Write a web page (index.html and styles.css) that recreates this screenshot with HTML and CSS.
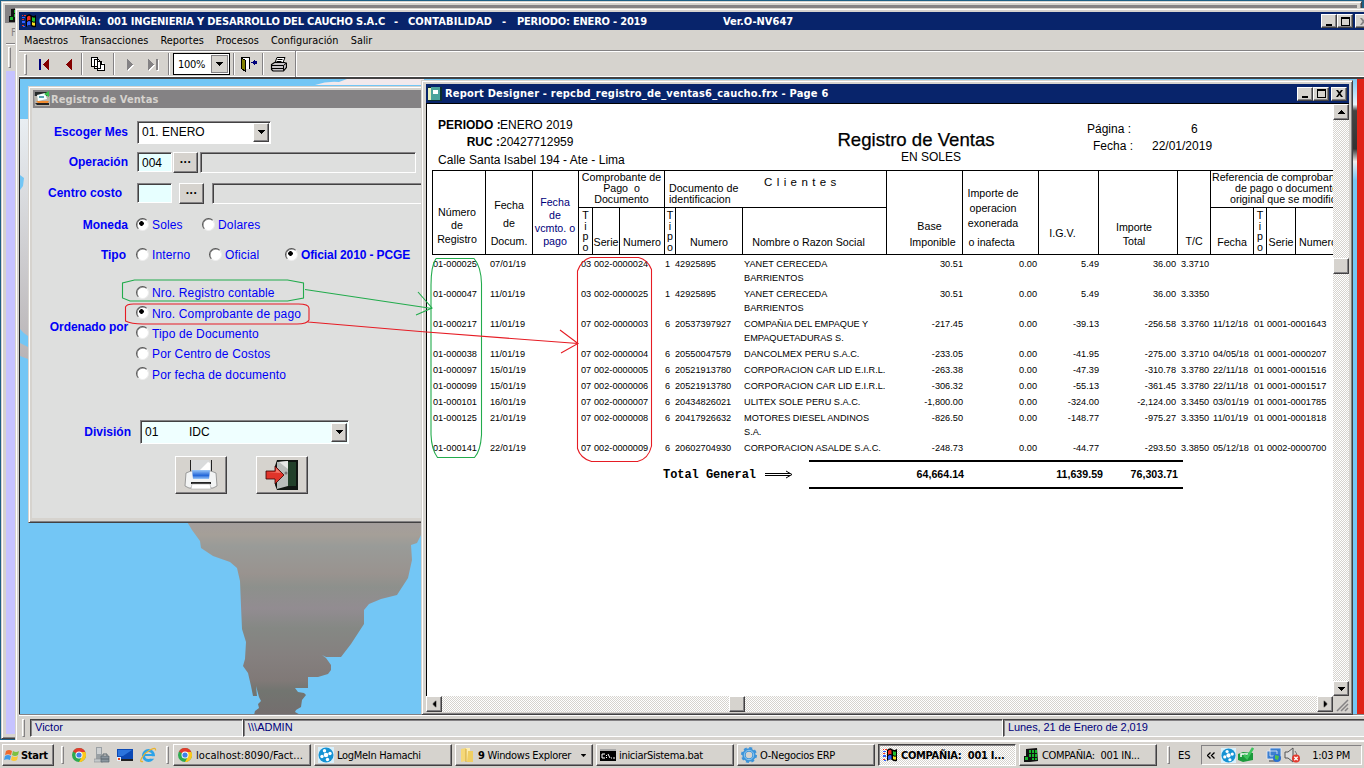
FILE: index.html
```html
<!DOCTYPE html>
<html lang="es">
<head>
<meta charset="utf-8">
<title>Registro de Ventas</title>
<link rel="stylesheet" href="styles.css">
</head>
<body>
<svg class="defs" width="0" height="0" aria-hidden="true">
  <symbol id="win" viewBox="0 0 16 16">
    <path d="M1 2h1v1H1zM3 2h2v1H3zM1 6h2v1H1zM1 12h2v1H1z" fill="#f03020"/>
    <path d="M1 4h3v1H1zM1 8h3v2H1zM2 13h2v1H2z" fill="#3060ff"/>
    <path d="M5 3q3-3 5-1t5 0v12q-3 1-5-1t-5 1z" fill="#000"/>
    <path d="M6 4q2-2 3.500-.5v4Q8 6.500 6 8z" fill="#f03020"/><path d="M11 4q1.500 1 3 .5v4q-1.500.5-3-.5z" fill="#20c030"/>
    <path d="M6 9q2-1.500 3.500-.5v4Q8 11.500 6 13z" fill="#3060ff"/><path d="M11 9q1.500 1 3 .5v3q-1.500.5-3-.5z" fill="#f8e020"/>
  </symbol>
  <symbol id="greenapp" viewBox="0 0 16 16">
    <path d="M3 2l11-1 1 13-8 1H1V9h2z" fill="#111"/>
    <path d="M6 3h2v3H6zM9 3h2v3H9zM12 3h2v3h-2zM6 7h2v3H6zM9 7h2v3H9zM12 7h2v3h-2zM2 10h3v3H2zM9 11h2v2H9zM12 11h2v2h-2z" fill="#19b52c"/>
  </symbol>
  <symbol id="chrome" viewBox="0 0 16 16">
    <circle cx="8" cy="8" r="7" fill="#2da94f"/>
    <path d="M8 8L2 4.400A7 7 0 0 1 14.300 5H8z" fill="#e33b2e"/>
    <path d="M8 15l3-5.500L10 5h4.400A7 7 0 0 1 8 15z" fill="#fdc71b"/>
    <circle cx="8" cy="8" r="3.500" fill="#fff"/><circle cx="8" cy="8" r="2.600" fill="#3f7fe8"/>
  </symbol>
  <symbol id="hamachi" viewBox="0 0 16 16">
    <rect width="16" height="16" fill="#d9f0fb"/><circle cx="8" cy="8" r="7.500" fill="#1592d3"/>
    <g fill="#fff"><circle cx="8" cy="8" r="2.300"/><circle cx="6.500" cy="3.700" r="1.700"/><circle cx="12" cy="6.500" r="1.700"/><circle cx="4" cy="9.500" r="1.700"/><circle cx="9.500" cy="12.500" r="1.700"/></g>
  </symbol>
  <symbol id="down" viewBox="0 0 7 4"><path d="M0 0h7v1H0zM1 1h5v1H1zM2 2h3v1H2zM3 3h1v1H3z"/></symbol>
  <symbol id="min" viewBox="0 0 13 11"><path d="M3 8h6v2H3z"/></symbol>
  <symbol id="max" viewBox="0 0 13 11"><path d="M2 1h9v9H2zM3 3v6h7V3z" fill-rule="evenodd"/></symbol>
  <symbol id="close" viewBox="0 0 13 11"><path d="M3 2h2l1.500 2L8 2h2L7.500 5.500 10 9H8L6.500 7 5 9H3l2.500-3.500z"/></symbol>
</svg>

<div class="desktop">
  <section class="window backwin">
    <div class="backtitle"><svg width="16" height="16"><use href="#greenapp"/></svg></div>
    <div class="backmenu">F</div>
    <div class="backbar"><i class="grip"></i></div>
    <div class="backbody"></div>
  </section>

  <section class="window main">
    <header class="title"><svg width="16" height="16"><use href="#win"/></svg>
      <span class="t1">COMPAÑIA:&nbsp; 001 INGENIERIA Y DESARROLLO DEL CAUCHO S.A.C</span><span class="t2">-</span><span class="t3">CONTABILIDAD</span><span class="t4">-</span><span class="t5">PERIODO: ENERO - 2019</span><span class="t6">Ver.O-NV647</span>
      <span class="ctl maincontrols"><b><svg width="13" height="11"><use href="#min"/></svg></b><b><svg width="13" height="11"><use href="#max"/></svg></b><b class="x"><svg class="off" width="13" height="11"><use href="#close"/></svg></b></span>
    </header>
    <nav class="menu"><span>Maestros</span><span>Transacciones</span><span>Reportes</span><span>Procesos</span><span>Configuración</span><span>Salir</span></nav>
    <div class="toolbar">
      <div class="tools">
        <i class="grip"></i>
        <span class="tool w-first"><svg width="12" height="12" shape-rendering="crispEdges"><path d="M1 1h2v11H1z" fill="#00007b"/><path d="M11 1v11L5 6.500z" fill="#840000"/></svg></span>
        <span class="tool w-prev"><svg width="8" height="12" shape-rendering="crispEdges"><path d="M7 1v11L1 6.500z" fill="#840000"/></svg></span>
        <i class="sep"></i>
        <span class="tool w-copy"><svg width="14" height="14" shape-rendering="crispEdges" fill="#fff" stroke="#000"><path d="M.5.500h6v9h-6zM3.500 2.500h4l2 2v7h-6zM6.500 4.500h4l3 3v6h-7z"/><path d="M10.500 4.500v3h3"/></svg></span>
        <i class="sep"></i>
        <span class="tool w-next"><svg width="8" height="13" shape-rendering="crispEdges"><path d="M2 2v11l6-5.500z" fill="#fff"/><path d="M1 1v11l6-5.500z" fill="#848284"/></svg></span>
        <span class="tool w-last"><svg width="13" height="13" shape-rendering="crispEdges"><path d="M2 2v11l6-5.500zM10 2h2v11h-2z" fill="#fff"/><path d="M1 1v11l6-5.500zM9 1h2v11H9z" fill="#848284"/></svg></span>
        <i class="sep"></i>
        <span class="zoom">100%<b><svg width="7" height="4"><use href="#down"/></svg></b></span>
        <i class="sep"></i>
        <span class="tool w-exit"><svg width="17" height="15" shape-rendering="crispEdges"><path d="M1.500 11V.5h8V12" fill="#fff" stroke="#000"/><path d="M1.500 1l4 2.500V14.500l-4-3z" fill="#848200" stroke="#000"/><path d="M11 5h1l3-3v2h2v3h-2v2l-3-3h-1z" fill="#00007b"/></svg></span>
        <i class="sep"></i>
        <span class="tool w-print"><svg width="17" height="15"><path d="M5 5.500l2-5h8l-2 5z" fill="#fff" stroke="#000"/><path d="M7.500 2.500h5M6.500 4.500h5" stroke="#000"/><path d="M1.500 7.500l3-2h10l2 1v4l-3 3.500H3l-1.500-1.500z" fill="#c6c3c6" stroke="#000" stroke-width="1.200"/><path d="M1.500 8.500h12l3-2.500M2 11.500h11M13.500 8.500v5" stroke="#000" fill="none"/></svg></span>
      </div>
    </div>
    <div class="client">
      <svg class="wallpaper" viewBox="20 80 1344 635" width="1344" height="635">
        <defs>
          <linearGradient id="land" gradientUnits="userSpaceOnUse" x1="0" y1="520" x2="0" y2="715"><stop offset="0" stop-color="#a39d9d"/><stop offset=".08" stop-color="#a59f98"/><stop offset=".14" stop-color="#999b98"/><stop offset=".28" stop-color="#99938f"/><stop offset=".35" stop-color="#8d908c"/><stop offset=".46" stop-color="#928c91"/><stop offset=".56" stop-color="#858884"/><stop offset=".7" stop-color="#85807f"/><stop offset=".83" stop-color="#807977"/><stop offset=".88" stop-color="#727570"/><stop offset="1" stop-color="#746e6e"/></linearGradient>
          <linearGradient id="haze" x1="0" y1="0" x2="0" y2="1"><stop offset="0" stop-color="#e9eef2"/><stop offset="1" stop-color="#b9b4b6"/></linearGradient>
          <linearGradient id="edge" x1="0" y1="0" x2="0" y2="1"><stop offset="0" stop-color="#7cc8f5"/><stop offset=".04" stop-color="#e8f3fa"/><stop offset=".05" stop-color="#444"/><stop offset=".11" stop-color="#333"/><stop offset=".13" stop-color="#eee"/><stop offset=".16" stop-color="#74c6f5"/><stop offset="1" stop-color="#74c6f5"/></linearGradient>
        </defs>
        <rect x="20" y="80" width="1344" height="635" fill="#73c6f5"/>
        <path d="M20 120h8v217q-4-2-8-7zM20 344l8 4v12l-8-3z" fill="url(#haze)"/>
        <path d="M20 176l4 3-1 8-3 4z" fill="#73c6f5"/>
        <path d="M315 86q12-4 24-3l8-3h77v6z" fill="#f2e9ec"/>
        <path d="M186 521l6 10 8 11 1 7 12 8 17 6 7 6 3 13 1 25 1 23 4 13-1 17-2 7 5 7 3 13 2 10h4l-1-10 3 11 2 4-3 3 1 4-4 3-1 4 10 3h42l-11-6 1-2 5-3 1-7 4-5-2-2-6-1-3-4h13v-11h10l10-3 3-4v-5l-5-7-4-3 4 2h15l10-13 13-20v-14l5-6 12-5 16-4 11-17 4-18-1-15 6-2 4-8 2-12z" fill="url(#land)"/>
        <path d="M1353 80h5v635h-5z" fill="url(#edge)"/><path d="M1357 80h7v635h-7z" fill="#de2418"/>
      </svg>
    </div>
    <footer class="status"><i class="grip"></i><span class="user">Victor</span><span class="role">\\\ADMIN</span><span class="date">Lunes, 21 de Enero de 2,019</span></footer>
  </section>

  <section class="window form">
    <header class="title gray"><svg width="16" height="16"><path d="M1 1h14v5H1z" fill="#252a2a"/><path d="M0 5h16v10H1z" fill="#b8b4ac"/><path d="M3 4l8-2 2 6-9 2z" fill="#f5ffff"/><path d="M5 5h5v2H5z" fill="#5aa0b0"/><path d="M10 3l5-3v6z" fill="#38c24c"/><path d="M2 10h13l-1 2H4z" fill="#f08b30"/><path d="M1 12h14v2H3z" fill="#222"/></svg><span>Registro de Ventas</span></header>
    <div class="fields">
      <div class="row r1"><label>Escoger Mes</label><span class="combo mes">01. ENERO<b><svg width="7" height="4"><use href="#down"/></svg></b></span></div>
      <div class="row r2"><label>Operación</label><span class="box">004</span><span class="dots">...</span><span class="long"></span></div>
      <div class="row r3"><label class="cc">Centro costo</label><span class="box"></span><span class="dots">...</span><span class="long"></span></div>
      <div class="row r4"><label>Moneda</label><span class="radio on soles">Soles</span><span class="radio">Dolares</span></div>
      <div class="row r5"><label class="tp">Tipo</label><span class="radio interno">Interno</span><span class="radio oficial">Oficial</span><span class="radio on strong">Oficial 2010 - PCGE</span></div>
      <div class="row r6"><label>Ordenado por</label><div class="radios"><span class="radio">Nro. Registro contable</span><span class="radio on">Nro. Comprobante de pago</span><span class="radio">Tipo de Documento</span><span class="radio">Por Centro de Costos</span><span class="radio">Por fecha de documento</span></div></div>
      <div class="row r7"><label>División</label><span class="combo division"><span class="code">01</span>IDC<b><svg width="7" height="4"><use href="#down"/></svg></b></span></div>
      <div class="actions">
        <span class="big"><svg width="34" height="32"><defs><linearGradient id="pb" x1="0" y1="0" x2="0" y2="1"><stop offset="0" stop-color="#9cc8f8"/><stop offset=".6" stop-color="#2266d8"/><stop offset="1" stop-color="#9cc8f8"/></linearGradient></defs><path d="M6.500 1v13M27.500 1v13" stroke="#222"/><path d="M7 1h18l2 4v10H7z" fill="#d9dbdc"/><path d="M14 13L24 3l2 1v9z" fill="#fff"/><path d="M2 14l5-2h20l5 2 1 13-4 2H5l-4-2z" fill="#f3f4f4" stroke="#888" stroke-width=".8"/><path d="M8 11h18l-1 9H9z" fill="url(#pb)"/><path d="M7 24h20" stroke="#222" stroke-width="2"/><path d="M8 25h18l1 5H7z" fill="#fff" stroke="#aaa" stroke-width=".6"/></svg></span>
        <span class="big"><svg width="34" height="32"><path d="M12 1h21v30H12l-2-5V7z" fill="#101512"/><path d="M22 3h9v24h-9z" fill="#22402a"/><path d="M12 3l11-1v25l-11 3z" fill="#b9bdbb"/><path d="M14 3l9-1v8z" fill="#e6e8e7"/><circle cx="21" cy="14" r="1.500" fill="#777"/><path d="M1 12h9V7l9 9-9 9v-5H1z" fill="#e0342a" stroke="#300" stroke-width=".8"/><path d="M2 13h9V9l5 5z" fill="#f4796c"/></svg></span>
      </div>
    </div>
  </section>

  <section class="window report">
    <header class="title"><svg width="14" height="14"><path d="M0 0h14v14H0z" fill="#0b2f2c"/><path d="M3 0h9v13H3z" fill="#4aa39b"/><path d="M0 1h3v12H0z" fill="#e8f0c0"/><path d="M5 3h5v4H5z" fill="#fff"/></svg><span>Report Designer - repcbd_registro_de_ventas6_caucho.frx - Page 6</span>
      <span class="ctl"><b><svg width="13" height="11"><use href="#min"/></svg></b><b><svg width="13" height="11"><use href="#max"/></svg></b><b class="x"><svg width="13" height="11"><use href="#close"/></svg></b></span></header>
    <div class="viewport">
      <div class="page">
        <div class="heading">
          <div class="company"><div><b>PERIODO :</b><span>ENERO 2019</span></div><div><b>RUC :</b><span>20427712959</span></div><p>Calle Santa Isabel 194 - Ate - Lima</p></div>
          <div class="name"><h1>Registro de Ventas</h1><p>EN SOLES</p></div>
          <div class="pageinfo"><span>Página :</span><span class="six">6</span><span class="fl">Fecha :</span><span>22/01/2019</span></div>
        </div>
        <div class="thead">
          <div class="c c1">Número<br>de<br>Registro</div>
          <div class="c c2">Fecha<br>de<br>Docum.</div>
          <div class="c c3">Fecha<br>de<br>vcmto. o<br>pago</div>
          <div class="group"><div class="top">Comprobante de<br>Pago&nbsp; o<br>Documento</div><div class="sub s1"><span class="v">T<br>i<br>p<br>o</span><span>Serie</span><span>Numero</span></div></div>
          <div class="group"><div class="top cli"><span>Documento de<br>identificacion</span><span class="wide">C l i e n t e s</span></div><div class="sub s2"><span class="v">T<br>i<br>p<br>o</span><span>Numero</span><span class="rs">Nombre o Razon Social</span></div></div>
          <div class="c c6"><span class="base">Base</span>Imponible</div>
          <div class="c c7">Importe de<br>operacion<br>exonerada<span class="in">o inafecta</span></div>
          <div class="c c8">I.G.V.</div>
          <div class="c c9">Importe<br>Total</div>
          <div class="c c10">T/C</div>
          <div class="group"><div class="top ref"><span>Referencia de comprobante</span><span class="l2">de pago o documento</span><span class="l3">original que se modifica</span></div><div class="sub s3"><span>Fecha</span><span class="v">T<br>i<br>p<br>o</span><span>Serie</span><span>Numero</span></div></div>
        </div>
        <div class="tbody">
          <div class="tr two"><span>01-000025</span><span>07/01/19</span><span>03</span><span>002-0000024</span><span>1</span><span>42925895</span><span>YANET CERECEDA<br>BARRIENTOS</span><span>30.51</span><span>0.00</span><span>5.49</span><span>36.00</span><span>3.3710</span></div>
          <div class="tr two"><span>01-000047</span><span>11/01/19</span><span>03</span><span>002-0000025</span><span>1</span><span>42925895</span><span>YANET CERECEDA<br>BARRIENTOS</span><span>30.51</span><span>0.00</span><span>5.49</span><span>36.00</span><span>3.3350</span></div>
          <div class="tr two"><span>01-000217</span><span>11/01/19</span><span>07</span><span>002-0000003</span><span>6</span><span>20537397927</span><span>COMPAÑIA DEL EMPAQUE Y<br>EMPAQUETADURAS S.</span><span>-217.45</span><span>0.00</span><span>-39.13</span><span>-256.58</span><span>3.3760</span><span>11/12/18</span><span>01</span><span>0001-0001643</span></div>
          <div class="tr"><span>01-000038</span><span>11/01/19</span><span>07</span><span>002-0000004</span><span>6</span><span>20550047579</span><span>DANCOLMEX PERU S.A.C.</span><span>-233.05</span><span>0.00</span><span>-41.95</span><span>-275.00</span><span>3.3710</span><span>04/05/18</span><span>01</span><span>0001-0000207</span></div>
          <div class="tr"><span>01-000097</span><span>15/01/19</span><span>07</span><span>002-0000005</span><span>6</span><span>20521913780</span><span>CORPORACION CAR LID E.I.R.L.</span><span>-263.38</span><span>0.00</span><span>-47.39</span><span>-310.78</span><span>3.3780</span><span>22/11/18</span><span>01</span><span>0001-0001516</span></div>
          <div class="tr"><span>01-000099</span><span>15/01/19</span><span>07</span><span>002-0000006</span><span>6</span><span>20521913780</span><span>CORPORACION CAR LID E.I.R.L.</span><span>-306.32</span><span>0.00</span><span>-55.13</span><span>-361.45</span><span>3.3780</span><span>22/11/18</span><span>01</span><span>0001-0001517</span></div>
          <div class="tr"><span>01-000101</span><span>16/01/19</span><span>07</span><span>002-0000007</span><span>6</span><span>20434826021</span><span>ULITEX SOLE PERU S.A.C.</span><span>-1,800.00</span><span>0.00</span><span>-324.00</span><span>-2,124.00</span><span>3.3450</span><span>03/01/19</span><span>01</span><span>0001-0001785</span></div>
          <div class="tr two"><span>01-000125</span><span>21/01/19</span><span>07</span><span>002-0000008</span><span>6</span><span>20417926632</span><span>MOTORES DIESEL ANDINOS<br>S.A.</span><span>-826.50</span><span>0.00</span><span>-148.77</span><span>-975.27</span><span>3.3350</span><span>11/01/19</span><span>01</span><span>0001-0001818</span></div>
          <div class="tr"><span>01-000141</span><span>22/01/19</span><span>07</span><span>002-0000009</span><span>6</span><span>20602704930</span><span>CORPORACION ASALDE S.A.C.</span><span>-248.73</span><span>0.00</span><span>-44.77</span><span>-293.50</span><span>3.3850</span><span>05/12/18</span><span>01</span><span>0002-0000700</span></div>
        </div>
        <div class="totals"><span class="tg">Total General</span><svg width="28" height="9" fill="none" stroke="#000" shape-rendering="crispEdges"><path d="M0 3.500h25M0 5.500h25"/><path d="M21 1l6 3.500-6 3.500" shape-rendering="auto"/></svg><div class="sums"><span>64,664.14</span><span>11,639.59</span><span>76,303.71</span></div></div>
      </div>
      <div class="vbar"><b class="btn"><svg width="7" height="4" class="up"><use href="#down"/></svg></b><b class="btn thumb"></b><b class="btn last"><svg width="7" height="4"><use href="#down"/></svg></b></div>
    </div>
    <div class="hbar"><b class="btn"><svg width="7" height="4" class="left"><use href="#down"/></svg></b><b class="btn thumb"></b><b class="btn last"><svg width="7" height="4" class="right"><use href="#down"/></svg></b><svg class="size" width="16" height="16"><path d="M4 15L15 4M8 15l7-7M12 15l3-3" stroke="#848284" stroke-width="1.500"/></svg></div>
  </section>

  <!-- hand-drawn notes linking the sort options with report columns -->
  <svg class="notes" width="1364" height="768" fill="none" stroke-width="1.100">
    <g stroke="#22ab4c"><path d="M122.500 298v-15l12-3h153l16 3v15l-16 3H130zM305 289.500l127 19M418 292l14 16-16 7"/><path d="M436 258.500h38q7 8 7.500 25V435q-1 16-7 22.500h-37q-6-8-6.500-23V285q0-19 5-26.500"/></g>
    <g stroke="#e61c24"><path d="M125.500 321v-14q1-3 8-3h165q10 0 10.500 4v12q-2 4-12 4H143q-12 0-17.500-3zM308 322l112 9.500 158 12M560 330l18 13.500-17 9.500"/><path d="M590.500 257.500h48q9 2 13 12V446q-3 13-14 15.500h-46q-11-3-14-13V271q4-11 13-13.500"/></g>
  </svg>

  <footer class="taskbar">
    <span class="task start"><svg width="16" height="16"><path d="M2 4q3-2 6 0L7 8Q4 6.500 1 8z" fill="#ee6a2c"/><path d="M9 4q3 2 6 0l-1 4q-3 2-6 0z" fill="#7cc142"/><path d="M1 9q3-2 6 0l-1 4q-3-1.500-6 0z" fill="#3f9be8"/><path d="M8 9q3 2 6 0l-1 4q-3 2-6 0z" fill="#fbc936"/></svg>Start</span>
    <i class="grip g1"></i>
    <span class="quick">
      <svg width="16" height="16"><use href="#chrome"/></svg>
      <svg width="16" height="16"><path d="M2 0h6v12H2z" fill="#9aa0a4"/><path d="M3 2h4M3 4h4M3 6h4" stroke="#fff"/><path d="M0 12h9v3H0z" fill="#c4c8ca" stroke="#8a8e90" stroke-width=".6"/><path d="M7 9h8v6H7z" fill="#8b969f" stroke="#59646d" stroke-width=".7"/><path d="M9 9V7h4v2M7 12h8" stroke="#59646d" fill="none"/></svg>
      <svg width="16" height="16"><path d="M0 2h16v10H0z" fill="#0b49b5"/><path d="M1 3h14L6 9H1z" fill="#2b74dd"/><path d="M1 12h15v2H3z" fill="#222"/><path d="M0 10h4v4H0z" fill="#e9f2fd"/><path d="M1 11h2v2H1z" fill="#e54820"/></svg>
      <svg width="17" height="16"><circle cx="8.500" cy="8.500" r="5" fill="none" stroke="#2ba3e8" stroke-width="3"/><path d="M4 8h9" stroke="#2ba3e8" stroke-width="2"/><path d="M9 9.300h7v2.500h-5z" fill="#d6d3ce"/><path d="M3 14.500Q-1 15.500 2 10.500T10 3q6-3.500 5.500.5" fill="none" stroke="#eab32c" stroke-width="1.300"/></svg>
    </span>
    <i class="grip g2"></i>
    <span class="task loc"><svg width="16" height="16"><use href="#chrome"/></svg>localhost:8090/Fact...</span>
    <span class="task"><svg width="16" height="16"><use href="#hamachi"/></svg>LogMeIn Hamachi</span>
    <span class="task"><svg width="16" height="16"><path d="M2 2l5-1v13l-5 1z" fill="#f5d878"/><path d="M7 1h4v13H7z" fill="#fdeeb2"/><path d="M9 4h5v11H8z" fill="#f0ce62"/><path d="M7 2v13" stroke="#d0a63c"/></svg><strong>9</strong>&nbsp;Windows Explorer<svg class="drop" width="5" height="3" viewBox="0 0 7 4"><use href="#down"/></svg></span>
    <span class="task"><svg width="16" height="16"><path d="M0 2h16v12H0z" fill="#000"/><path d="M0 2h16v2H0z" fill="#aaa"/><path d="M5 7H2v4h3M6.500 8v1M6.500 10v1M8 7l2 4M11 11h1M13 11h2" stroke="#fff" fill="none"/></svg>iniciarSistema.bat</span>
    <span class="task"><svg width="16" height="16"><circle cx="8" cy="8" r="5" fill="none" stroke="#3c93d9" stroke-width="3.500"/><circle cx="8" cy="8" r="7" fill="none" stroke="#3c93d9" stroke-width="2" stroke-dasharray="3 2.500"/><circle cx="8" cy="8" r="4.700" fill="none" stroke="#8cc8f2" stroke-width="1"/></svg>O-Negocios ERP</span>
    <span class="task active"><svg width="16" height="16"><use href="#win"/></svg>COMPAÑIA:&nbsp; 001 I...</span>
    <span class="task"><svg width="16" height="16"><use href="#greenapp"/></svg>COMPAÑIA:&nbsp; 001 IN...</span>
    <i class="grip g3"></i>
    <span class="lang">ES</span>
    <span class="tray"><svg class="chev" width="8" height="7" fill="none" stroke="#000" stroke-width="1.300"><path d="M3.500.5l-3 3 3 3M7.500.5l-3 3 3 3"/></svg><svg width="15" height="15"><use href="#hamachi"/></svg><svg width="16" height="16"><path d="M0 7l5-2 10 1v7l-10 2-5-2z" fill="#1c9a3c"/><path d="M3 10V7h7" fill="none" stroke="#fff" stroke-width="1.500"/><path d="M6 8l3 3 6-10" fill="none" stroke="#3fc45e" stroke-width="2.500"/></svg><svg class="net" width="16" height="16"><path d="M4 1h11v8H4zM1 4h10v8H1z" fill="#3c7fd0" stroke="#e8eef8" stroke-width=".8"/><path d="M3 13h7v2H3z" fill="#888"/><circle cx="11" cy="11" r="4" fill="#2a6fd2"/><path d="M9 8l4 1-1 4-3-1z" fill="#4fc24e"/></svg><svg width="17" height="16"><path d="M1 5h3l5-4v14l-5-4H1z" fill="#dcdcdc" stroke="#555"/><path d="M11 4q3 3 1 6" fill="none" stroke="#777"/><circle cx="12" cy="11.500" r="4" fill="#e33a2e"/><path d="M10.300 9.800l3.400 3.400M13.700 9.800l-3.400 3.400" stroke="#fff" stroke-width="1.300"/></svg><span class="clock">1:03 PM</span></span>
  </footer>
</div>
</body>
</html>
```
FILE: styles.css
```css
* { box-sizing: border-box; }
body { margin: 0; overflow: hidden; font: 11px "DejaVu Sans Condensed", "DejaVu Sans", sans-serif; color: #000; }
svg { display: block; flex: none; }
.defs { position: absolute; }
i { font-style: normal; }
p, h1 { margin: 0; font-weight: normal; }

.desktop { position: relative; width: 1364px; height: 768px; overflow: hidden; background: #1d5f85; }
.window { position: absolute; display: flex; flex-direction: column; background: #d6d3ce; white-space: nowrap; }

.grip { flex: none; width: 3px; border: 1px solid; border-color: #fff #848284 #848284 #fff; background: #d6d3ce; }
.sep { flex: none; width: 2px; height: 22px; border-left: 1px solid #848284; border-right: 1px solid #fff; }
.btn, .ctl b { display: flex; align-items: center; justify-content: center; flex: none; background: #d6d3ce; border: 1px solid; border-color: #fff #424142 #424142 #fff; box-shadow: inset -1px -1px #848284; }

/* window in the background */
.backwin { left: 1px; top: 1px; width: 1361px; height: 738px; padding: 4px; border: 1px solid; border-color: #d6d3ce #424142 #424142 #d6d3ce; box-shadow: inset 1px 1px #fff, inset -1px -1px #848284; }
.backtitle { height: 18px; margin: -1px 0 0 -1px; padding: 2px 3px; background: #848284; }
.backmenu { height: 20px; padding: 3px 5px; color: #848284; font-size: 10.5px; }
.backbar { display: flex; height: 28px; padding: 3px 2px; border-top: 1px solid #848284; box-shadow: inset 0 1px #fff; }
.backbody { flex: 1; background: #c6c3ff; }

/* main window */
.main { left: 15px; top: 8px; width: 1353px; height: 732px; padding: 4px 0 0 4px; box-shadow: inset 1px 1px #d6d3ce, inset 2px 2px #fff; }
.title { display: flex; align-items: center; height: 18px; flex: none; background: #08246b; color: #fff; font-weight: bold; font-size: 11px; }
.main .title { padding-left: 2px; }
.t1 { width: 355px; margin-left: 2px; letter-spacing: -.16px; }
.t2 { width: 14px; } .t3 { width: 94px; letter-spacing: .1px; } .t4 { width: 15px; } .t5 { width: 206px; letter-spacing: -.2px; }
.ctl { display: flex; margin-left: auto; margin-right: 2px; }
.ctl b { width: 16px; height: 14px; }
.ctl b.x { margin-left: 2px; }
.maincontrols { margin-right: -3px; }
.off { fill: #848284; }
.menu { display: flex; height: 20px; align-items: center; padding-left: 5px; gap: 12.3px; font-size: 10.8px; }
.toolbar { height: 29px; border-top: 1px solid #848284; border-bottom: 2px solid #424142; box-shadow: inset 0 1px #fff, inset 0 -1px #fff; }
.tools { display: flex; align-items: center; width: 277px; height: 26px; padding-left: 5px; border-right: 1px solid #848284; box-shadow: 1px 0 #fff; }
.tools .grip { height: 21px; }
.tool { display: flex; justify-content: center; flex: none; }
.w-first { width: 33px; } .w-prev { width: 21px; padding-right: 4px; } .w-copy { width: 30px; } .w-next { width: 30px; } .w-last { width: 23px; padding-right: 6px; } .w-exit { width: 27px; } .w-print { width: 29px; }
.zoom { display: flex; align-items: center; width: 57px; height: 22px; margin: 0 3px; padding-left: 4px; background: #fff; border: 1px solid #000; font-size: 11px; letter-spacing: -.3px; }
.zoom b { display: flex; width: 17px; height: 18px; margin: 0 1px 0 auto; align-items: center; justify-content: center; background: #d6d3ce; border: 1px solid #848284; }
.client { height: 635px; padding-left: 1px; background: #222; overflow: hidden; }
.status { display: flex; flex: 1; padding: 4px 0 3px 3px; border-top: 1px solid #848284; box-shadow: inset 0 1px #fff; color: #00007b; font: 11px/15px "Liberation Sans", Arial, sans-serif; }
.status .grip { margin-right: 5px; }
.status span { padding-left: 4px; background: #dedfde; border: 1px solid; border-color: #424142 #fff #fff #424142; box-shadow: inset 1px 1px #848284; height: 18px; }
.user { width: 213px; } .role { width: 760px; } .date { flex: 1; letter-spacing: -.08px; }

/* parameter form */
.form { left: 28px; top: 86px; width: 410px; height: 437px; padding: 3px 4px 4px; border: 1px solid; border-color: #d6d3ce #424142 #424142 #d6d3ce; box-shadow: inset 1px 1px #fff, inset 0 -1px #848284; }
.gray { background: #848284; color: #d6d3ce; padding-left: 1px; letter-spacing: .08px; }
.gray span { margin-left: 1px; }
.fields { flex: 1; margin-left: -1px; padding-top: 9px; background: #dedfde; color: #0000f7; font: 12px "Liberation Sans", Arial, sans-serif; }
.row { display: flex; align-items: center; }
.row label { flex: none; width: 96px; margin-right: 9px; text-align: right; font-weight: bold; }
.r1, .r2 { height: 30px; } .r3, .r4 { height: 32px; } .r5 { height: 28px; }
.row .cc { width: 90px; margin-right: 15px; } .row .tp { width: 94px; margin-right: 11px; }
.combo { display: flex; align-items: center; padding: 0 2px 0 5px; color: #000; background: #fff; border: 1px solid; border-color: #848284 #fff #fff #848284; box-shadow: inset 1px 1px #424142; }
.combo b, .dots, .big { background: #d6d3ce; border: 1px solid; border-color: #fff #424142 #424142 #fff; box-shadow: inset -1px -1px #848284; }
.combo b { display: flex; align-items: center; justify-content: center; width: 16px; height: 19px; margin-left: auto; }
.mes { width: 134px; height: 23px; padding: 0 1px 0 4px; }
.division { width: 209px; height: 24px; background: #efffff; padding: 0 1px 0 4px; }
.code { width: 44px; }
.box { width: 35px; height: 20px; padding: 2px 0 0 4px; line-height: 16px; color: #000; background: #e7ffff; border: 1px solid; border-color: #848284 #fff #fff #848284; box-shadow: inset 1px 1px #424142; }
.dots { width: 25px; height: 21px; color: #000; text-align: center; font-weight: bold; line-height: 12px; letter-spacing: .5px; }
.long { width: 216px; height: 21px; margin-left: 2px; border: 1px solid; border-color: #848284 #fff #fff #848284; box-shadow: inset 1px 1px #424142; }
.r2 .dots { margin-left: 1px; }
.r3 .dots { margin-left: 7px; } .r3 .long { margin-left: 8px; flex: none; }
.radio { display: flex; align-items: center; flex: none; letter-spacing: .15px; }
.radio::before { content: ""; width: 11px; height: 11px; margin: 0 3px 2px -1px; border-radius: 50%; background: #fff; border: 1px solid; border-color: #555 #eee #eee #555; box-shadow: inset .5px .5px #777; }
.radio.on::before { background: radial-gradient(circle at 4.500px 4.500px, #000 2px, #fff 2.600px); }
.soles { width: 66px; } .interno { width: 73px; } .oficial { width: 76px; }
.strong { font-weight: bold; letter-spacing: -.12px; }
.r6 { margin-top: 14px; height: 102px; }
.r6 label { margin-top: -15px; letter-spacing: -.1px; }
.radios { display: flex; flex-direction: column; }
.radios .radio { height: 20.400px; }
.r7 { margin-top: 32px; height: 30px; }
.r7 label { width: 99px; margin-right: 9px; }
.actions { display: flex; gap: 29px; padding: 9px 0 0 143px; }
.big { display: flex; align-items: center; justify-content: center; width: 52px; height: 38px; }

/* report preview */
.report { left: 421px; top: 80px; width: 932px; height: 635px; padding: 2px 3px 2px 4px; border: 1px solid; border-color: #d6d3ce #424142 #424142 #d6d3ce; box-shadow: inset 1px 1px #fff, inset -1px -1px #848284; }
.report .title { height: 19px; padding-left: 2px; margin: 1px 0 0; }
.report .title > span:nth-child(2) { margin-left: 3px; letter-spacing: .2px; }
.viewport { display: flex; height: 593px; border-top: 1px solid #000; }
.page { width: 908px; height: 592px; background: #fff; border-left: 1px solid #000; overflow: hidden; font: 10.670px "Liberation Sans", Arial, sans-serif; }
.vbar, .hbar { display: flex; background: repeating-conic-gradient(#fff 0 25%, #d6d3ce 0 50%) 0 0 / 2px 2px; }
.vbar { flex-direction: column; width: 16px; }
.btn { width: 16px; height: 16px; }
.vbar .thumb { margin-top: 138px; } .vbar .last { margin-top: auto; height: 15px; }
.hbar { height: 16px; }
.hbar .thumb { margin-left: 287px; } .hbar .last { margin-left: auto; }
.size { background: #d6d3ce; }
.up { transform: rotate(180deg); } .left { transform: rotate(90deg); } .right { transform: rotate(-90deg); }

.heading { display: flex; height: 66px; font-size: 12px; }
.company { width: 380px; padding: 13px 0 0 11px; line-height: 17px; }
.company div { display: flex; }
.company b { width: 62px; text-align: right; }
.company p { padding-top: 1px; letter-spacing: .04px; }
.name { width: 220px; margin-right: 52px; padding: 25px 2px 0 0; text-align: center; }
h1 { font-size: 18.600px; line-height: 21px; -webkit-text-stroke: .25px #000; }
.name p { line-height: 14px; padding-left: 30px; }
.pageinfo { display: grid; grid-template-columns: 65px auto; align-content: start; padding-top: 17px; line-height: 17px; margin-left: 8px; }
.six { padding-left: 39px; }
.fl { padding-left: 6px; }

.thead { display: grid; grid-template-columns: 53px 47px 46px 86px 222px 76px 76px 60px 79px 33px 150px; width: 928px; height: 85px; margin-left: 5px; border: solid #000; border-width: 1px 0; }
.c { display: grid; align-content: end; border-left: 1px solid #000; text-align: center; }
.c1 { line-height: 13.500px; padding-bottom: 8px; padding-right: 4px; }
.c2 { line-height: 18px; padding-bottom: 4px; }
.c3 { line-height: 13px; padding: 0 1px 6px 0; color: #00007b; }
.c6 { line-height: 16px; padding: 0 0 4px 16px; }
.base { padding-right: 6px; }
.c7 { line-height: 15px; padding: 0 15px 4px 0; }
.in { margin-top: 4px; padding-right: 3px; }
.c8 { line-height: 14px; padding: 0 12px 14px 0; }
.c9 { line-height: 14px; padding: 0 8px 6px 0; }
.c10 { line-height: 14px; padding-bottom: 6px; }
.group { display: flex; flex-direction: column; border-left: 1px solid #000; }
.top { display: grid; align-content: end; height: 36px; padding-bottom: 2px; line-height: 11px; text-align: center; }
.cli { grid-template-columns: 75px 1fr; text-align: left; padding-left: 4px; }
.wide { padding-left: 20px; margin-top: -6px; font-size: 11.500px; letter-spacing: .6px; }
.ref { text-align: left; padding-left: 1px; }
.l2 { padding-left: 23px; } .l3 { padding-left: 18px; }
.sub { display: grid; flex: 1; border-top: 1px solid #000; }
.sub span { display: grid; align-content: end; text-align: center; line-height: 14px; padding-bottom: 5px; border-left: 1px solid #000; }
.sub span:first-child { border-left: 0; }
.sub .v { line-height: 10.500px; padding-bottom: 2px; }
.sub .rs { padding-right: 12px; }
.s1 { grid-template-columns: 13px 27px 45px; } .s2 { grid-template-columns: 10px 67px 144px; } .s3 { grid-template-columns: 42px 13px 29px 45px; }

.tbody { padding: 1px 0 0 6px; font-size: 9.200px; line-height: 14px; }
.tr { display: grid; grid-template-columns: 57px 91px 13px 71px 10px 69px 156px 63px 74px 62px 77px 37px 41px 13px 70px; height: 16px; padding-top: 1px; }
.two { height: 30px; }
.tr span:nth-child(n+8):nth-child(-n+11) { text-align: right; }
.tr span:nth-child(12) { padding-left: 5px; }

.totals { display: flex; align-items: center; height: 30px; margin: 3px 0 0 236px; }
.tg { width: 102px; padding-top: 1px; font: bold 12px "Liberation Mono", "Courier New", monospace; letter-spacing: -.05px; }
.sums { display: grid; grid-template-columns: 155px 139px 75px; width: 374px; height: 29px; margin-left: 16px; align-items: center; border: solid #000; border-width: 2px 0; text-align: right; font-weight: bold; }

.notes { position: absolute; left: 0; top: 0; }

/* taskbar */
.taskbar { position: absolute; left: 0; top: 740px; display: flex; width: 1364px; height: 28px; padding: 4px 2px 2px; background: #d6d3ce; box-shadow: inset 0 2px #fff; font-size: 11px; white-space: nowrap; }
.task { display: flex; flex: none; align-items: center; width: 138px; height: 22px; margin-right: 3px; padding-left: 3px; background: #d6d3ce; border: 1px solid; border-color: #fff #424142 #424142 #fff; box-shadow: inset -1px -1px #848284; letter-spacing: -.3px; }
.task svg { margin-right: 3px; }
.loc { letter-spacing: .05px; }
.start { width: 52px; padding-left: 1px; margin-right: 7px; font-weight: bold; }
.start svg { margin-right: 1px; }
.taskbar .grip { height: 18px; margin-top: 2px; }
.quick { display: flex; gap: 7px; align-items: center; padding: 0 9px 0 7px; }
.g2 { margin-right: 4px; }
.active { font-weight: bold; background: repeating-conic-gradient(#fff 0 25%, #d6d3ce 0 50%) 0 0 / 2px 2px; border-color: #424142 #fff #fff #424142; box-shadow: inset 1px 1px #848284; }
.task .drop { margin: 0 6px 0 auto; }
.g3 { margin-left: 7px; }
.lang { width: 31px; padding: 5px 0 0 8px; }
.tray { display: flex; align-items: center; width: 161px; height: 20px; margin-top: 1px; padding-left: 5px; border: 1px solid; border-color: #848284 #fff #fff #848284; }
.tray svg { margin-right: 2px; }
.tray .chev { margin-right: 6px; }
.tray .net { margin-left: 10px; }
.clock { margin: 0 0 0 auto; padding-right: 11px; letter-spacing: -.3px; }
```
